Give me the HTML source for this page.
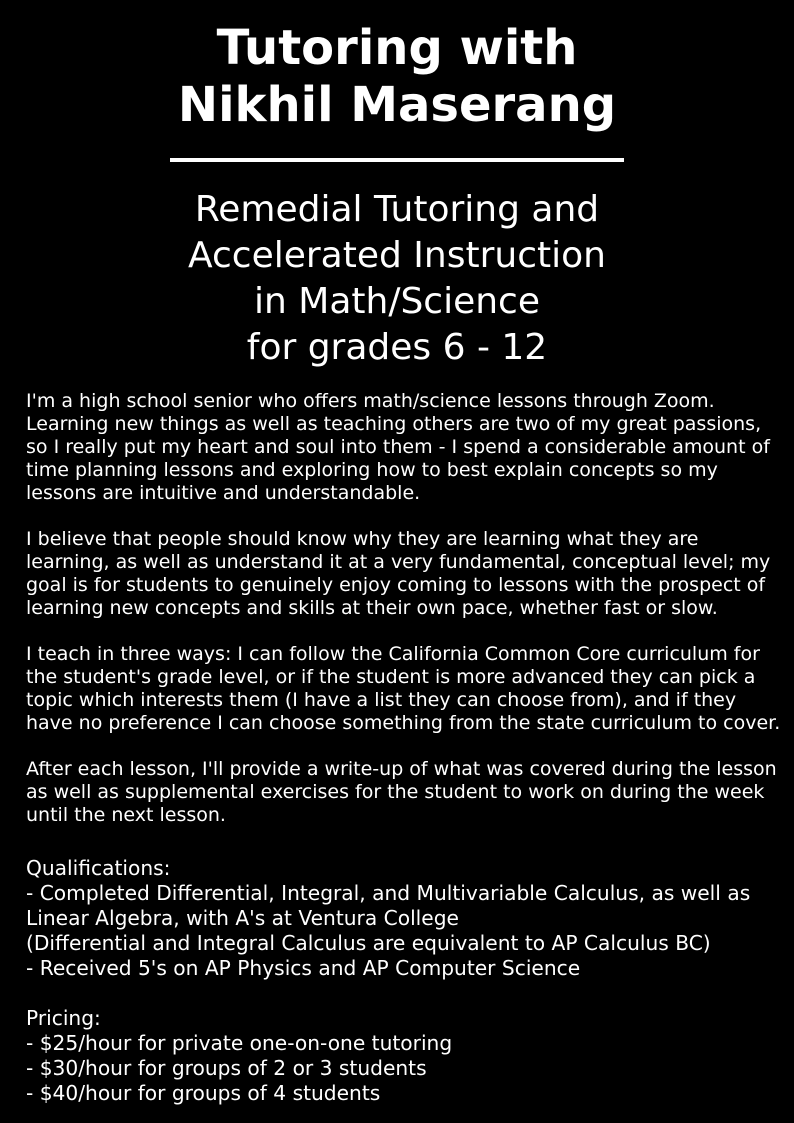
<!DOCTYPE html>
<html><head><meta charset="utf-8"><style>
html,body{margin:0;padding:0;background:#000;width:794px;height:1123px;overflow:hidden}
body{font-family:"DejaVu Sans","Liberation Sans",sans-serif;color:#fff;position:relative}
.t{position:absolute;top:20px;left:0;width:794px;text-align:center;font-weight:bold;font-size:48px;line-height:57px}
.r{position:absolute;top:158px;left:170px;width:454px;height:4px;background:#fff}
.s{position:absolute;top:187px;left:0;width:794px;text-align:center;font-size:36px;line-height:46px}
.b{position:absolute;top:390px;left:26px;width:770px;font-size:19px;line-height:23px;white-space:nowrap}
.c{position:absolute;top:856px;left:26px;width:770px;font-size:20.2px;line-height:25px;white-space:nowrap}
</style></head><body>
<div class="t">Tutoring with<br>Nikhil Maserang</div>
<div class="r"></div>
<div class="s">Remedial Tutoring and<br>Accelerated Instruction<br>in Math/Science<br>for grades 6 - 12</div>
<div class="b">I'm a high school senior who offers math/science lessons through Zoom.<br>
Learning new things as well as teaching others are two of my great passions,<br>
so I really put my heart and soul into them - I spend a considerable amount of<br>
time planning lessons and exploring how to best explain concepts so my<br>
lessons are intuitive and understandable.<br><br>
I believe that people should know why they are learning what they are<br>
learning, as well as understand it at a very fundamental, conceptual level; my<br>
goal is for students to genuinely enjoy coming to lessons with the prospect of<br>
learning new concepts and skills at their own pace, whether fast or slow.<br><br>
I teach in three ways: I can follow the California Common Core curriculum for<br>
the student's grade level, or if the student is more advanced they can pick a<br>
topic which interests them (I have a list they can choose from), and if they<br>
have no preference I can choose something from the state curriculum to cover.<br><br>
After each lesson, I'll provide a write-up of what was covered during the lesson<br>
as well as supplemental exercises for the student to work on during the week<br>
until the next lesson.</div>
<div class="c">Qualifications:<br>
- Completed Differential, Integral, and Multivariable Calculus, as well as<br>
Linear Algebra, with A's at Ventura College<br>
(Differential and Integral Calculus are equivalent to AP Calculus BC)<br>
- Received 5's on AP Physics and AP Computer Science<br><br>
Pricing:<br>
- $25/hour for private one-on-one tutoring<br>
- $30/hour for groups of 2 or 3 students<br>
- $40/hour for groups of 4 students</div>
</body></html>
